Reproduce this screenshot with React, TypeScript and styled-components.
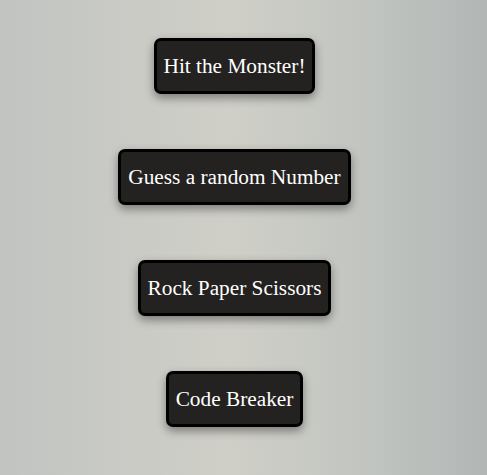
import React from "react";
import styled, { createGlobalStyle } from "styled-components";

const Global = createGlobalStyle`
  html, body { margin: 0; padding: 0; }
  body {
    min-height: 100vh;
    background: linear-gradient(to right, #c1c4c1 0%, #c9cac5 25%, #cfcfc7 47%, #c3c6c1 72%, #b2b7b6 100%);
    font-family: "Liberation Serif", "Times New Roman", serif;
  }
`;

const Menu = styled.nav`
  display: flex;
  flex-direction: column;
  align-items: center;
  gap: 55px;
  padding: 38px 18px 0 0;
`;

const GameButton = styled.button`
  font-family: "Liberation Serif", "Times New Roman", serif;
  font-size: 21.3px;
  line-height: 24px;
  color: #ffffff;
  background: #232221;
  border: 3px solid #000000;
  border-radius: 7px;
  padding: 13px 7px;
  box-shadow: 0 4px 10px rgba(0, 0, 0, 0.4);
  cursor: pointer;
`;

const games = ["Hit the Monster!", "Guess a random Number", "Rock Paper Scissors", "Code Breaker"];

export default function App() {
  return (
    <>
      <Global />
      <Menu>
        {games.map((g) => (
          <GameButton key={g}>{g}</GameButton>
        ))}
      </Menu>
    </>
  );
}
